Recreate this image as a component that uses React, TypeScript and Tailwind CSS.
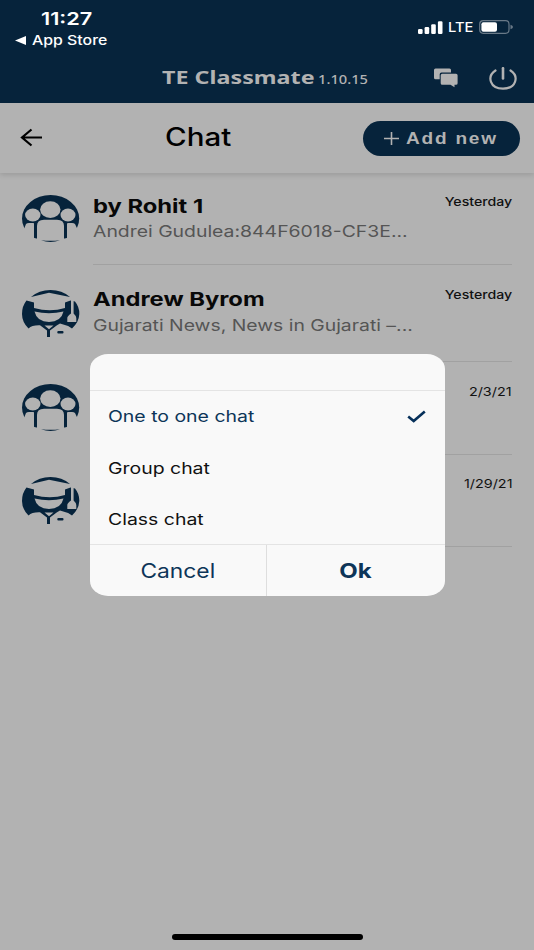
import type { ReactNode } from 'react'

type AvatarKind = 'group' | 'student'

interface ChatRow {
  id: number
  kind: AvatarKind
  title?: string
  preview?: string
  date: string
  rowClass: string
  avatarClass: string
  titleClass?: string
  previewClass?: string
  dateClass: string
}

const chats: ChatRow[] = [
  {
    id: 1,
    kind: 'group',
    title: 'by Rohit 1',
    preview: 'Andrei Gudulea:844F6018-CF3E...',
    date: 'Yesterday',
    rowClass: 'h-[92px] pt-[22px]',
    avatarClass: 'pt-[21.500px]',
    titleClass: 'scale-x-[1.25]',
    previewClass: 'mt-[1px] scale-x-[1.212]',
    dateClass: 'scale-x-[1.18] font-medium',
  },
  {
    id: 2,
    kind: 'student',
    title: 'Andrew Byrom',
    preview: 'Gujarati News, News in Gujarati –...',
    date: 'Yesterday',
    rowClass: 'h-[97px] pt-[23px]',
    avatarClass: 'pt-[24.500px]',
    titleClass: 'scale-x-[1.25]',
    previewClass: 'mt-[2px] scale-x-[1.21]',
    dateClass: 'scale-x-[1.18] font-medium',
  },
  {
    id: 3,
    kind: 'group',
    date: '2/3/21',
    rowClass: 'h-[93px] pt-[23px]',
    avatarClass: 'pt-[22px]',
    dateClass: 'scale-x-[1.2]',
  },
  {
    id: 4,
    kind: 'student',
    date: '1/29/21',
    rowClass: 'h-[92px] pt-[22px]',
    avatarClass: 'pt-[21.500px]',
    dateClass: 'scale-x-[1.2]',
  },
]

const options = [
  { label: 'One to one chat', selected: true, className: 'text-[#0d3558]' },
  { label: 'Group chat', selected: false, className: 'text-[#111]' },
  { label: 'Class chat', selected: false, className: 'text-[#111]' },
]

function GroupAvatar() {
  return (
    <svg width="58" height="48" viewBox="0 0 58 48" className="shrink-0">
      <ellipse cx="28.6" cy="23.6" rx="28.6" ry="23.6" fill="#06233b" />
      <g fill="#b2b2b2">
        <ellipse cx="28.3" cy="14.6" rx="10.2" ry="8.3" />
        <ellipse cx="10.8" cy="20" rx="7.7" ry="6.5" />
        <ellipse cx="46" cy="20" rx="7.5" ry="6.5" />
        <path d="M15 48V30.500Q15 25 22 24.700H35Q42 25 42 30.500V48Z" />
        <path d="M-1 33.500H2.200L4 29Q5 28 7 28H11.500Q12 28 12 29V48H-1Z" />
        <path d="M58 33.500H55.200L53 29Q52 28 50 28H46Q45 28 45 29V48H58Z" />
        <path d="M11 43.500H46V48H11Z" />
      </g>
      <path d="M19 45.300Q28.500 46.300 38 45.300Q28.500 48.600 19 45.300Z" fill="#06233b" />
    </svg>
  )
}

function StudentAvatar() {
  return (
    <svg width="58" height="48" viewBox="0 0 58 48" className="shrink-0">
      <g fill="#06233b">
        <path d="M9 7Q17 0 28.500 0Q40 0 48 7L27 2.700Z" />
        <path d="M4.500 10.500L12 12.500V18Q28 22.500 43 18V12.500L48.500 10.500L53 11.500Q57.500 17 57.300 24Q57 32 50 38.500Q45 35 38 33.500L35 35.300L28 40.500V47H25V40.500L18 35.300Q10 35 6.500 38.500Q0 32 0 24Q0 16 4.500 10.500Z" />
        <rect x="35.300" y="41" width="6.200" height="2.400" rx="1" />
      </g>
      <g fill="#b2b2b2">
        <path d="M12.500 21.500Q27 25 41.500 21.500Q39 32 27 32Q15 32 12.500 21.500Z" />
        <path d="M22.500 35.500H31.500L27 39.200Z" />
        <path d="M49 6H51.600V23.500Q54.300 26 54.300 28V32H45.300V28Q45.300 26 49 23.500Z" />
      </g>
    </svg>
  )
}

function StatusBar() {
  return (
    <div className="flex h-[54px] justify-between pr-[21px] text-white">
      <div className="pl-[15px] pt-[9px]">
        <div className="ml-[26px] w-fit origin-left scale-x-[1.24] text-[17.500px] font-semibold leading-[20px]">
          11:27
        </div>
        <div className="mt-[3px] flex items-center">
          <svg width="11" height="9" viewBox="0 0 11 9" fill="white">
            <path d="M0 4.500L11 0V9Z" />
          </svg>
          <span className="ml-[6px] origin-left scale-x-[1.22] text-[13px] font-medium leading-[16px]">
            App Store
          </span>
        </div>
      </div>
      <div className="flex h-[54px] items-center">
        <svg width="25" height="13" viewBox="0 0 25 13" fill="white" className="mr-[5px]">
          <rect x="0" y="8" width="4.600" height="5" rx="1.200" />
          <rect x="6.600" y="6" width="4.600" height="7" rx="1.200" />
          <rect x="13.200" y="3.300" width="4.600" height="9.700" rx="1.200" />
          <rect x="19.900" y="0.300" width="4.600" height="12.700" rx="1.200" />
        </svg>
        <span className="w-[31px] origin-left scale-x-[1.13] text-[13px] font-medium leading-none">LTE</span>
        <svg width="34" height="14" viewBox="0 0 34 14">
          <rect x="0.700" y="0.700" width="29.300" height="12.600" rx="3.500" fill="none" stroke="#697987" strokeWidth="1.200" />
          <rect x="2.400" y="2.300" width="15.600" height="9.400" rx="2" fill="white" />
          <path d="M31.500 4.700Q34 5.500 34 7Q34 8.500 31.500 9.300Z" fill="#697987" />
        </svg>
      </div>
    </div>
  )
}

function AppHeader() {
  return (
    <header className="h-[103px] bg-[#06233b]">
      <StatusBar />
      <div className="flex h-[46px] items-center pl-[162px] text-[#b2b2b2]">
        <div className="flex w-[272px] items-baseline">
          <span className="w-[156px] origin-left scale-x-[1.26] whitespace-nowrap font-['Noto_Sans'] text-[18.500px] font-bold">
            TE Classmate
          </span>
          <span className="origin-left scale-x-[1.13] font-['Noto_Sans'] text-[13px] font-medium">1.10.15</span>
        </div>
        <svg width="24" height="20" viewBox="0 0 24 20" fill="#b2b2b2" className="mt-[1px] shrink-0">
          <path d="M1.500 0.500H15.500Q17 0.500 17 2V4.500H7.500Q5.700 4.500 5.700 6.300V11.300H1.500Q0 11.300 0 9.800V2Q0 0.500 1.500 0.500Z" />
          <path d="M8.300 5.800H22Q23.600 5.800 23.600 7.300V15.300Q23.600 16.800 22 16.800H20.500V19.300L16.500 16.800H8.300Q6.700 16.800 6.700 15.300V7.300Q6.700 5.800 8.300 5.800Z" />
        </svg>
        <svg
          width="28"
          height="23"
          viewBox="0 0 28 23"
          fill="none"
          stroke="#b2b2b2"
          strokeWidth="2.200"
          strokeLinecap="round"
          className="ml-[31px] mt-[2px] shrink-0"
        >
          <path d="M14 1.200V11.500" strokeWidth="2.600" />
          <path d="M6.500 3.500C-2.500 9.500 1 21.600 14 21.600S30.500 9.500 21.500 3.500" />
        </svg>
      </div>
    </header>
  )
}

function Toolbar() {
  return (
    <div className="flex h-[70px] items-center pl-[20px] pr-[14px] shadow-[0_2px_5px_rgba(0,0,0,0.13)]">
      <svg width="23" height="19" viewBox="0 0 23 19" fill="none" stroke="#000" strokeWidth="2.200" className="mb-[1px]">
        <path d="M11.500 1.500L2 9.500L11.500 17.500M2 9.500H22" />
      </svg>
      <h1 className="mb-[2px] ml-[122px] w-[198px] origin-left scale-x-[1.18] text-[25px] font-medium leading-none text-black">
        Chat
      </h1>
      <button className="flex h-[35px] w-[157px] shrink-0 items-center rounded-full bg-[#06233b] pl-[21px] text-[#b2b2b2]">
        <svg width="15" height="13" viewBox="0 0 15 13" stroke="#b2b2b2" strokeWidth="1.600">
          <path d="M0 6.500H15M7.500 0V13" />
        </svg>
        <span className="ml-[7px] mt-[1px] origin-left scale-x-[1.19] whitespace-nowrap font-['Liberation_Sans'] text-[16px] font-bold leading-none tracking-[1.500px]">
          Add new
        </span>
      </button>
    </div>
  )
}

function ChatItem({ chat }: { chat: ChatRow }) {
  return (
    <div className="flex pl-[21.500px]">
      <div className={`${chat.avatarClass} w-[71.500px] shrink-0`}>
        {chat.kind === 'group' ? <GroupAvatar /> : <StudentAvatar />}
      </div>
      <div className={`${chat.rowClass} flex w-[419px] justify-between border-b border-[#a1a1a1]`}>
        <div className="whitespace-nowrap">
          <div className={`${chat.titleClass ?? ''} h-[24px] w-fit origin-left text-[19px] font-bold leading-[24px] text-[#080808]`}>
            {chat.title}
          </div>
          <div className={`${chat.previewClass ?? ''} h-[22px] w-fit origin-left text-[16px] leading-[22px] text-[#555]`}>
            {chat.preview}
          </div>
        </div>
        <div className={`${chat.dateClass} h-fit origin-right text-[12px] leading-[14px] text-[#111]`}>
          {chat.date}
        </div>
      </div>
    </div>
  )
}

function DialogButton({ children }: { children: ReactNode }) {
  return <button className="flex items-center justify-center text-[20px] text-[#0d3558]">{children}</button>
}

function ChatTypeDialog() {
  return (
    <div className="absolute left-[89.500px] top-[353.500px] flex h-[242.500px] w-[355.500px] flex-col overflow-hidden rounded-[18px/15px] bg-[#f9f9f9]">
      <div className="h-[37px] border-b border-[#e4e4e4]" />
      <div className="h-[154.500px] border-b border-[#e4e4e4]">
        {options.map((option) => (
          <div key={option.label} className="flex h-[51.400px] items-center justify-between pl-[18px] pr-[19px]">
            <span className={`${option.className} origin-left scale-x-[1.215] text-[16px] leading-none`}>{option.label}</span>
            {option.selected ? (
              <svg width="19" height="13" viewBox="0 0 19 13" fill="none" stroke="#06305a" strokeWidth="2.600">
                <path d="M1.200 6.500L6.700 11L17.800 1.500" />
              </svg>
            ) : null}
          </div>
        ))}
      </div>
      <div className="grid flex-1 grid-cols-[177px_1fr] divide-x divide-[#dedede]">
        <DialogButton>
          <span className="scale-x-[1.14]">Cancel</span>
        </DialogButton>
        <DialogButton>
          <span className="scale-x-[1.2] font-bold">Ok</span>
        </DialogButton>
      </div>
    </div>
  )
}

export default function App() {
  return (
    <div className="relative flex h-[950px] w-[534px] flex-col overflow-hidden bg-[#b2b2b2] font-['Inter',sans-serif]">
      <AppHeader />
      <Toolbar />
      <main className="flex-1">
        {chats.map((chat) => (
          <ChatItem key={chat.id} chat={chat} />
        ))}
      </main>
      <div className="mx-auto mb-[10px] h-[6px] w-[191px] rounded-full bg-black" />
      <ChatTypeDialog />
    </div>
  )
}
